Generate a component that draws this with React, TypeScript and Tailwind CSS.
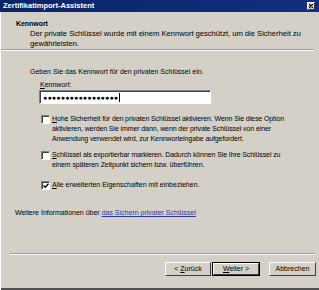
import React from "react";

const U = ({ children }: { children: React.ReactNode }) => <span className="underline">{children}</span>;

function Check({ checked = false }: { checked?: boolean }) {
  return (
    <div className="mt-[1px] w-[9px] h-[9px] shrink-0 border-t border-l border-t-[#808080] border-l-[#808080] border-b border-r border-b-white border-r-white">
      <div className="w-full h-full border-t border-l border-t-[#404040] border-l-[#404040] bg-white flex items-center justify-center">
        {checked && (
          <svg width="6" height="6" viewBox="0 0 6 6">
            <path d="M0.5 2.5 L2.2 4.3 L5.5 0.8" stroke="black" strokeWidth="1.4" fill="none" />
          </svg>
        )}
      </div>
    </div>
  );
}

function Btn({ children, def = false, w }: { children: React.ReactNode; def?: boolean; w: string }) {
  return (
    <div className={def ? "border border-black" : ""}>
      <div
        className={`${w} ${def ? "h-[12px]" : "h-[14px]"} border-t border-l border-t-white border-l-white border-b border-r border-b-[#404040] border-r-[#404040] bg-[#d4d0c8] flex items-center justify-center text-black`}
      >
        <span>{children}</span>
      </div>
    </div>
  );
}

export default function App() {
  return (
    <div
      className="w-[319px] h-[290px] bg-[#d4d0c8] overflow-hidden flex flex-col text-[7px] leading-[10px] text-black whitespace-nowrap"
      style={{ fontFamily: '"Liberation Sans", Arial, sans-serif' }}
    >
      <div className="h-[12px] bg-gradient-to-r from-[#0a246a] to-[#12307f] flex items-center justify-between pl-[3px] pr-[4px] shrink-0">
        <span className="text-white font-bold text-[7.5px]">Zertifikatimport-Assistent</span>
        <div className="w-[8px] h-[8px] bg-[#d4d0c8] border-t border-l border-white border-b-[#404040] border-r-[#404040] border-b border-r flex items-center justify-center">
          <svg width="4" height="4" viewBox="0 0 4 4">
            <path d="M0 0 L4 4 M4 0 L0 4" stroke="black" strokeWidth="1.2" />
          </svg>
        </div>
      </div>
      <div className="flex-1 flex flex-col border-l border-l-white">
        <div className="pt-[7px] pl-[15px] text-[7.7px] tracking-[-0.05px]">
          <div className="font-bold text-[7px]">Kennwort</div>
          <div className="pl-[14px]">
            <div>Der private Schlüssel wurde mit einem Kennwort geschützt, um die Sicherheit zu</div>
            <div>gewährleisten.</div>
          </div>
        </div>
        <div className="mr-[6px] h-[2px] border-t border-t-[#a09c94] border-b border-b-white" />
        <div className="pl-[29px] mt-[16px]">Geben Sie das Kennwort für den privaten Schlüssel ein.</div>
        <div className="pl-[39px] mt-[3px]">
          <U>K</U>ennwort:
        </div>
        <div className="ml-[38px] w-[172px] h-[14px] border-t border-l border-t-[#808080] border-l-[#808080] border-b border-r border-b-white border-r-white">
          <div className="w-full h-full border-t border-l border-t-[#404040] border-l-[#404040] bg-white flex items-center pl-[2px] text-[7px] tracking-[0.2px]">
            ●●●●●●●●●●●●●●●●●
            <span className="w-px h-[9px] bg-black ml-[1px]" />
          </div>
        </div>
        <div className="pl-[40px] mt-[10px] flex gap-[2px] tracking-[-0.1px]">
          <Check />
          <div>
            <div><U>H</U>ohe Sicherheit für den privaten Schlüssel aktivieren. Wenn Sie diese Option</div>
            <div>aktivieren, werden Sie immer dann, wenn der private Schlüssel von einer</div>
            <div>Anwendung verwendet wird, zur Kennworteingabe aufgefordert.</div>
          </div>
        </div>
        <div className="pl-[40px] mt-[6px] flex gap-[2px] tracking-[-0.1px]">
          <Check />
          <div>
            <div><U>S</U>chlüssel als exportierbar markieren. Dadurch können Sie Ihre Schlüssel zu</div>
            <div>einem späteren Zeitpunkt sichern bzw. überführen.</div>
          </div>
        </div>
        <div className="pl-[40px] mt-[10px] flex gap-[2px]">
          <Check checked />
          <div><U>A</U>lle erweiterten Eigenschaften mit einbeziehen.</div>
        </div>
        <div className="pl-[14px] mt-[18px]">
          Weitere Informationen über <span className="text-[#2a3aa8] underline">das Sichern privater Schlüssel</span>
        </div>
        <div className="mt-[35px] ml-[9px] mr-[4px] h-[2px] border-t border-t-[#a09c94] border-b border-b-white" />
        <div className="flex justify-end mt-[7px] pr-[3px]">
          <Btn w="w-[46px]">&lt; <U>Z</U>urück</Btn>
          <div className="ml-[1px]"><Btn def w="w-[46px]"><U>W</U>eiter &gt;</Btn></div>
          <div className="ml-[9px]"><Btn w="w-[47px]">Abbrechen</Btn></div>
        </div>
        <div className="flex-1" />
        <div className="h-[2px] bg-[#505050]" />
      </div>
    </div>
  );
}
